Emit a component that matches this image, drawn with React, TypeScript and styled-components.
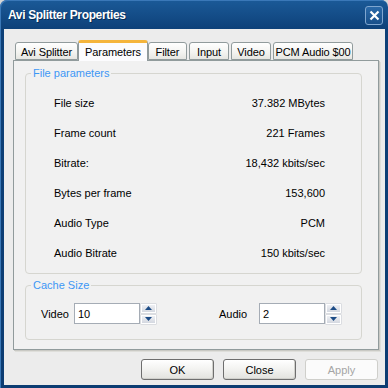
import React from "react";
import styled, { createGlobalStyle } from "styled-components";

const Global = createGlobalStyle`
  html, body { margin: 0; padding: 0; background: #d6d6d6; }
  body { font-family: "Liberation Sans", Arial, sans-serif; font-size: 11px; color: #000; }
`;

const Window = styled.div`
  width: 388px;
  height: 388px;
  box-sizing: border-box;
  background: linear-gradient(#1b5a98, #0d4078 30px, #0c3c72);
  border-radius: 7px 7px 0 0;
  display: flex;
  flex-direction: column;
  padding: 0 3px 3px 4px;
  box-shadow: inset 1px 1px 0 #3a78b8;
`;

const TitleBar = styled.div`
  height: 29px;
  flex: 0 0 29px;
  display: flex;
  align-items: center;
  justify-content: space-between;
  padding: 0 2px 0 4px;
`;

const Title = styled.div`
  color: #fff;
  font-weight: bold;
  font-size: 12px;
  letter-spacing: -0.35px;
  text-shadow: 1px 1px 0 #0a2c55;
`;

const CloseBtn = styled.div`
  width: 18px;
  height: 19px;
  box-sizing: border-box;
  border: 1px solid #7fa6d0;
  border-radius: 3px;
  background: linear-gradient(#2a69a8, #184f8a);
  display: flex;
  align-items: center;
  justify-content: center;
  margin-top: 2px;
`;

const Client = styled.div`
  flex: 1;
  background: #ececec;
  display: flex;
  flex-direction: column;
  padding: 11px 7px 0 9px;
`;

const TabRow = styled.div`
  display: flex;
  align-items: flex-end;
  padding-left: 2px;
  height: 20px;
  position: relative;
  z-index: 2;
`;

const Tab = styled.div<{ $w: number; $active?: boolean }>`
  width: ${(p) => p.$w}px;
  box-sizing: border-box;
  height: ${(p) => (p.$active ? 21 : 18)}px;
  margin: ${(p) => (p.$active ? "0 0 -1px -2px" : "0 2px 0 0")};
  border: 1px solid #919b9c;
  border-bottom: ${(p) => (p.$active ? "none" : "1px solid #919b9c")};
  border-top: ${(p) => (p.$active ? "3px solid #f5b53c" : "1px solid #919b9c")};
  border-radius: 3px 3px 0 0;
  background: ${(p) => (p.$active ? "#fcfcfe" : "linear-gradient(#ffffff, #f3f3f0 60%, #e6e6e2)")};
  display: flex;
  align-items: center;
  justify-content: center;
  font-size: 11px;
  letter-spacing: -0.1px;
  white-space: nowrap;
  padding-top: ${(p) => (p.$active ? 0 : 1)}px;
`;

const Panel = styled.div`
  width: 366px;
  height: 290px;
  box-sizing: border-box;
  border: 1px solid #919b9c;
  background: #f1f1f1;
  box-shadow: 1px 1px 0 #c9c9c4, 2px 2px 0 #dededa;
  padding: 12px 16px 0 11px;
  display: flex;
  flex-direction: column;
  gap: 11px;
`;

const GroupBox = styled.div<{ $h: number }>`
  position: relative;
  height: ${(p) => p.$h}px;
  box-sizing: border-box;
  border: 1px solid #d6d6d0;
  border-radius: 4px;
`;

const Legend = styled.span`
  position: absolute;
  top: -7px;
  left: 5px;
  padding: 0 2px;
  background: #f1f1f1;
  color: #3d97f5;
  font-size: 11px;
  line-height: 13px;
`;

const Rows = styled.div`
  padding: 14px 36px 0 28px;
  display: flex;
  flex-direction: column;
`;

const Row = styled.div`
  height: 30px;
  display: flex;
  align-items: center;
  justify-content: space-between;
`;

const CacheRow = styled.div`
  display: flex;
  align-items: center;
  padding: 17px 0 0 15px;
`;

const FieldLabel = styled.span<{ $w: number }>`
  width: ${(p) => p.$w}px;
`;

const Input = styled.div`
  width: 66px;
  height: 21px;
  box-sizing: border-box;
  border: 1px solid #a5acb5;
  background: #fff;
  display: flex;
  align-items: center;
  padding-left: 3px;
  font-size: 11px;
`;

const Spin = styled.div<{ $gapAfter?: number }>`
  display: flex;
  flex-direction: column;
  gap: 2px;
  margin-left: 1px;
  margin-right: ${(p) => p.$gapAfter ?? 0}px;
`;

const SpinBtn = styled.div`
  width: 15px;
  height: 9px;
  box-sizing: border-box;
  border: 1px solid #fff;
  background: linear-gradient(#eef0f4, #d4d8e0);
  box-shadow: 0 0 0 0.5px #c4c8d0;
  display: flex;
  align-items: center;
  justify-content: center;
`;

const ButtonRow = styled.div`
  display: flex;
  justify-content: flex-end;
  gap: 9px;
  margin-top: 9px;
`;

const Button = styled.div<{ $disabled?: boolean }>`
  width: 73px;
  height: 21px;
  box-sizing: border-box;
  border: 1px solid ${(p) => (p.$disabled ? "#cfcfcb" : "#6e6e6e")};
  border-radius: 3px;
  background: ${(p) => (p.$disabled ? "#fbfbfb" : "linear-gradient(#ffffff, #f2f2f0 50%, #e2e2de)")};
  color: ${(p) => (p.$disabled ? "#a5a5a5" : "#000")};
  display: flex;
  align-items: center;
  justify-content: center;
  font-size: 11px;
  box-shadow: ${(p) => (p.$disabled ? "none" : "inset -1px -1px 0 #d0d0cc")};
`;

const Arrow = ({ up }: { up?: boolean }) => (
  <svg width="7" height="4" viewBox="0 0 7 4">
    <path d={up ? "M0 4 L3.5 0 L7 4 Z" : "M0 0 L3.5 4 L7 0 Z"} fill="#1d4c86" />
  </svg>
);

const params: [string, string][] = [
  ["File size", "37.382 MBytes"],
  ["Frame count", "221 Frames"],
  ["Bitrate:", "18,432 kbits/sec"],
  ["Bytes per frame", "153,600"],
  ["Audio Type", "PCM"],
  ["Audio Bitrate", "150 kbits/sec"],
];

const tabs: [string, number, boolean?][] = [
  ["Avi Splitter", 63],
  ["Parameters", 70, true],
  ["Filter", 39],
  ["Input", 40],
  ["Video", 40],
  ["PCM Audio $00", 80],
];

export default function App() {
  return (
    <>
      <Global />
      <Window>
        <TitleBar>
          <Title>Avi Splitter Properties</Title>
          <CloseBtn>
            <svg width="11" height="11" viewBox="0 0 11 11">
              <path d="M1.5 1.5 L9.5 9.5 M9.5 1.5 L1.5 9.5" stroke="#fff" strokeWidth="2.2" />
            </svg>
          </CloseBtn>
        </TitleBar>
        <Client>
          <TabRow>
            {tabs.map(([t, w, a]) => (
              <Tab key={t} $w={w} $active={a}>
                {t}
              </Tab>
            ))}
          </TabRow>
          <Panel>
            <GroupBox $h={201}>
              <Legend>File parameters</Legend>
              <Rows>
                {params.map(([k, v]) => (
                  <Row key={k}>
                    <span>{k}</span>
                    <span>{v}</span>
                  </Row>
                ))}
              </Rows>
            </GroupBox>
            <GroupBox $h={55}>
              <Legend>Cache Size</Legend>
              <CacheRow>
                <FieldLabel $w={33}>Video</FieldLabel>
                <Input>10</Input>
                <Spin $gapAfter={63}>
                  <SpinBtn><Arrow up /></SpinBtn>
                  <SpinBtn><Arrow /></SpinBtn>
                </Spin>
                <FieldLabel $w={40}>Audio</FieldLabel>
                <Input>2</Input>
                <Spin>
                  <SpinBtn><Arrow up /></SpinBtn>
                  <SpinBtn><Arrow /></SpinBtn>
                </Spin>
              </CacheRow>
            </GroupBox>
          </Panel>
          <ButtonRow>
            <Button>OK</Button>
            <Button>Close</Button>
            <Button $disabled>Apply</Button>
          </ButtonRow>
        </Client>
      </Window>
    </>
  );
}
